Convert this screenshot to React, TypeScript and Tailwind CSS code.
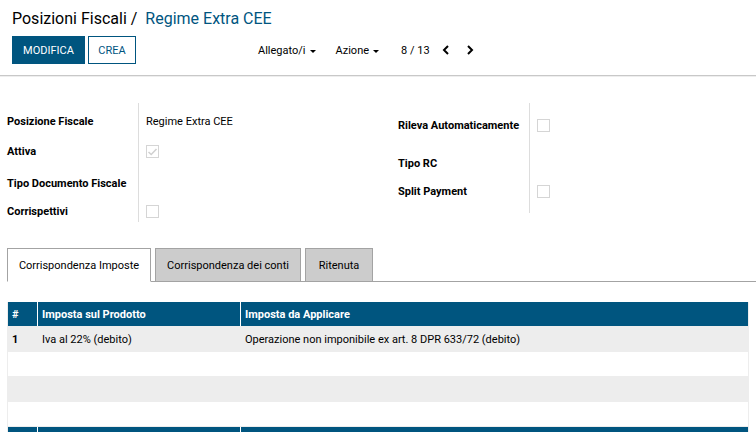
import type { ReactNode } from "react";

type Field = {
  id: string;
  label: string;
  height: string;
  text?: string;
  check?: boolean;
};

const leftFields: Field[] = [
  { id: "name", label: "Posizione Fiscale", height: "h-9", text: "Regime Extra CEE" },
  { id: "active", label: "Attiva", height: "h-6", check: true },
  { id: "doc-type", label: "Tipo Documento Fiscale", height: "h-10", text: "" },
  { id: "receipts", label: "Corrispettivi", height: "h-4", check: false },
];

const rightFields: Field[] = [
  { id: "auto", label: "Rileva Automaticamente", height: "h-11", check: false },
  { id: "rc-type", label: "Tipo RC", height: "h-8", text: "" },
  { id: "split", label: "Split Payment", height: "h-6", check: false },
];

function Caret() {
  return (
    <svg viewBox="0 0 6 3" className="mt-[3px] h-[3px] w-[6px]" fill="currentColor" aria-hidden="true">
      <path d="M0 0h6L3 3z" />
    </svg>
  );
}

function Chevron({ d }: { d: string }) {
  return (
    <svg viewBox="0 0 8 10" className="h-[10px] w-2" fill="none" stroke="currentColor" strokeWidth="2" aria-hidden="true">
      <path d={d} />
    </svg>
  );
}

function Checkbox({ id, checked }: { id: string; checked: boolean }) {
  return (
    <span className="grid size-[13px]">
      <input
        id={id}
        type="checkbox"
        checked={checked}
        disabled
        readOnly
        className="col-start-1 row-start-1 size-[13px] appearance-none border border-[#d5d5d5] bg-white"
      />
      {checked && (
        <svg
          viewBox="0 0 13 13"
          className="pointer-events-none col-start-1 row-start-1 size-[13px]"
          fill="none"
          stroke="#d0d0d0"
          strokeWidth="1.5"
          aria-hidden="true"
        >
          <path d="M2.5 7l2.7 2.5L10.5 4" />
        </svg>
      )}
    </span>
  );
}

function FieldGroup({ fields, end }: { fields: Field[]; end: string }) {
  return (
    <div className="flex items-start">
      <div className="w-[131px] shrink-0">
        {fields.map((f) => (
          <div key={f.id} className={`flex items-center ${f.height}`}>
            {f.check === undefined ? (
              <span className="font-bold whitespace-nowrap">{f.label}</span>
            ) : (
              <label htmlFor={f.id} className="font-bold whitespace-nowrap">
                {f.label}
              </label>
            )}
          </div>
        ))}
      </div>
      <div className={`flex-1 border-l border-[#dddddd] pl-[7px] ${end}`}>
        {fields.map((f) => (
          <div key={f.id} className={`flex items-center ${f.height}`}>
            {f.check === undefined ? <span>{f.text}</span> : <Checkbox id={f.id} checked={f.check} />}
          </div>
        ))}
      </div>
    </div>
  );
}

function Tab({ width, active = false, children }: { width: string; active?: boolean; children: ReactNode }) {
  return (
    <button
      type="button"
      role="tab"
      aria-selected={active}
      className={`h-[34px] border border-[#a3a3a3] text-center whitespace-nowrap ${width} ${
        active ? "border-b-white bg-white" : "border-b-[#a3a3a3] bg-[#cccccc]"
      }`}
    >
      {children}
    </button>
  );
}

export default function App() {
  return (
    <div className="h-screen overflow-hidden bg-white font-[Roboto,sans-serif] text-[11px] leading-[17px] text-black">
      <header className="border-b border-[#c8c8c8] px-3 pt-2 pb-[11px] shadow-[0_1px_0_#eeeeee]">
        <nav className="flex h-[22px] items-center gap-2 text-base" aria-label="Breadcrumb">
          <a href="#list">Posizioni Fiscali /</a>
          <span className="text-[#00557f]">Regime Extra CEE</span>
        </nav>
        <div className="mt-[6px] grid grid-cols-[1fr_2fr] items-center">
          <div className="flex gap-[3px]">
            <button type="button" className="h-7 w-[73px] border border-[#00557f] bg-[#00557f] text-white">
              MODIFICA
            </button>
            <button type="button" className="h-7 w-12 border border-[#00557f] bg-white text-[#00557f]">
              CREA
            </button>
          </div>
          <div className="flex items-center pl-[2px]">
            <button type="button" className="flex items-center gap-1">
              Allegato/i <Caret />
            </button>
            <button type="button" className="ml-5 flex items-center gap-1">
              Azione <Caret />
            </button>
            <span className="ml-[22px]">8 / 13</span>
            <button type="button" aria-label="Precedente" className="ml-3">
              <Chevron d="M6 1L2 5l4 4" />
            </button>
            <button type="button" aria-label="Successivo" className="ml-4">
              <Chevron d="M2 1l4 4-4 4" />
            </button>
          </div>
        </div>
      </header>

      <main>
        <section className="grid grid-cols-2 items-start gap-10 px-[7px] pt-[27px]">
          <FieldGroup fields={leftFields} end="pb-[3px]" />
          <FieldGroup fields={rightFields} end="pb-[10px]" />
        </section>

        <div className="mt-[26px] ml-[7px] flex gap-1 shadow-[inset_0_-1px_0_#a3a3a3]" role="tablist">
          <Tab width="w-36" active>
            Corrispondenza Imposte
          </Tab>
          <Tab width="w-[146px]">Corrispondenza dei conti</Tab>
          <Tab width="w-[68px]">Ritenuta</Tab>
        </div>

        <div className="mx-[7px] mt-5 border-x border-[#ededed]">
          <table className="w-full table-fixed border-separate border-spacing-0 text-left">
            <colgroup>
              <col className="w-[30px]" />
              <col className="w-[203px]" />
              <col />
            </colgroup>
            <thead className="bg-[#00557f] text-white">
              <tr className="h-6">
                <th className="border-r border-white p-0 pl-1 font-bold">#</th>
                <th className="border-r border-white p-0 pl-1 font-bold">Imposta sul Prodotto</th>
                <th className="p-0 pl-1 font-bold">Imposta da Applicare</th>
              </tr>
            </thead>
            <tbody>
              <tr className="h-[26px] bg-[#ededed]">
                <th scope="row" className="p-0 pl-1 font-bold">1</th>
                <td className="p-0 pl-1">Iva al 22% (debito)</td>
                <td className="p-0 pl-1">Operazione non imponibile ex art. 8 DPR 633/72 (debito)</td>
              </tr>
              <tr className="h-6">
                <td colSpan={3} />
              </tr>
              <tr className="h-[26px] bg-[#ededed]">
                <td colSpan={3} />
              </tr>
              <tr className="h-[25px]">
                <td colSpan={3} className="border-b border-[#ededed]" />
              </tr>
            </tbody>
            <tfoot className="bg-[#00557f]">
              <tr className="h-6">
                <td className="border-r border-white" />
                <td className="border-r border-white" />
                <td />
              </tr>
            </tfoot>
          </table>
        </div>
      </main>
    </div>
  );
}
